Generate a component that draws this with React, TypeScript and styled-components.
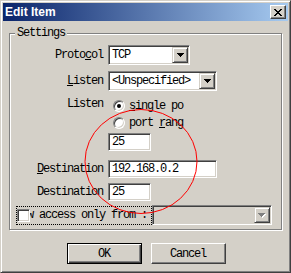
import styled, { createGlobalStyle } from "styled-components";

const GlobalStyle = createGlobalStyle`
  html, body {
    margin: 0;
    padding: 0;
    background: #d4d0c8;
  }
`;

const mono = `"Liberation Mono", "DejaVu Sans Mono", monospace`;

const Window = styled.div`
  position: relative;
  box-sizing: border-box;
  width: 291px;
  height: 273px;
  padding: 2px;
  background: #d4d0c8;
  border: 1px solid;
  border-color: #d4d0c8 #404040 #404040 #d4d0c8;
  box-shadow: inset 1px 1px 0 #ffffff, inset -1px -1px 0 #808080;
  font-family: ${mono};
  font-size: 12px;
  letter-spacing: -1.2px;
  color: #000;
  display: flex;
  flex-direction: column;
`;

const TitleBar = styled.div`
  height: 18px;
  display: flex;
  align-items: center;
  justify-content: space-between;
  padding: 0 2px 0 2px;
  background: linear-gradient(to right, #0a246a, #a6caf0);
`;

const Title = styled.span`
  font-family: "Liberation Sans", Arial, sans-serif;
  font-weight: bold;
  font-size: 12px;
  letter-spacing: 0;
  color: #ffffff;
`;

const CloseButton = styled.div`
  box-sizing: border-box;
  width: 16px;
  height: 14px;
  display: flex;
  align-items: center;
  justify-content: center;
  background: #d4d0c8;
  border: 1px solid;
  border-color: #ffffff #404040 #404040 #ffffff;
  box-shadow: inset -1px -1px 0 #808080;
`;

const Body = styled.div`
  display: flex;
  flex-direction: column;
  padding: 12px 6px 0 6px;
`;

const Group = styled.div`
  display: flex;
  flex-direction: column;
  height: 197px;
  box-sizing: border-box;
  border: 1px solid #808080;
  box-shadow: inset 1px 1px 0 #ffffff, 1px 1px 0 #ffffff;
  padding-bottom: 4px;
`;

const Legend = styled.span`
  align-self: flex-start;
  margin: -7px 0 0 5px;
  padding: 0 2px;
  line-height: 12px;
  background: #d4d0c8;
`;

const FieldRow = styled.div<{ $top: number }>`
  display: grid;
  grid-template-columns: 93px auto;
  column-gap: 5px;
  align-items: center;
  justify-items: start;
  margin-top: ${({ $top }) => $top}px;
`;

const Label = styled.span<{ $start?: boolean }>`
  justify-self: end;
  line-height: 12px;
  white-space: nowrap;
  align-self: ${({ $start }) => ($start ? "start" : "center")};
  margin-top: ${({ $start }) => ($start ? "1px" : "0")};
`;

const Sunken = styled.div<{ $w: number; $h: number; $disabled?: boolean }>`
  box-sizing: border-box;
  width: ${({ $w }) => $w}px;
  height: ${({ $h }) => $h}px;
  display: flex;
  align-items: center;
  padding: 0 2px 0 2px;
  background: ${({ $disabled }) => ($disabled ? "#d4d0c8" : "#ffffff")};
  border: 1px solid;
  border-color: #808080 #ffffff #ffffff #808080;
  box-shadow: inset 1px 1px 0 #404040, inset -1px -1px 0 #d4d0c8;
  white-space: nowrap;
  overflow: hidden;
`;

const FieldText = styled.span`
  flex: 1;
  padding-left: 1px;
  line-height: 12px;
`;

const ArrowButton = styled.div`
  box-sizing: border-box;
  width: 16px;
  height: 16px;
  display: flex;
  align-items: center;
  justify-content: center;
  margin-right: -1px;
  background: #d4d0c8;
  border: 1px solid;
  border-color: #d4d0c8 #404040 #404040 #d4d0c8;
  box-shadow: inset 1px 1px 0 #ffffff, inset -1px -1px 0 #808080;
`;

const RadioList = styled.div`
  display: flex;
  flex-direction: column;
`;

const RadioOption = styled.div`
  height: 17px;
  display: flex;
  align-items: center;
  gap: 4px;
  margin-left: 5px;
`;

const RadioCircle = styled.span<{ $checked?: boolean }>`
  box-sizing: border-box;
  position: relative;
  width: 12px;
  height: 12px;
  border-radius: 50%;
  background: #ffffff;
  border: 1px solid;
  border-color: #808080 #ffffff #ffffff #808080;
  box-shadow: inset 1px 1px 0 #404040, inset -1px -1px 0 #d4d0c8;
  &::after {
    content: "";
    display: ${({ $checked }) => ($checked ? "block" : "none")};
    position: absolute;
    left: 3px;
    top: 3px;
    width: 4px;
    height: 4px;
    border-radius: 50%;
    background: #000;
  }
`;

const CheckRow = styled.div`
  display: flex;
  align-items: center;
  margin: 4px 0 0 6px;
`;

const Focus = styled.div`
  box-sizing: border-box;
  width: 136px;
  height: 19px;
  display: flex;
  align-items: center;
  border: 1px dotted #000;
`;

const CheckBox = styled.span`
  box-sizing: border-box;
  width: 13px;
  height: 13px;
  flex: none;
  background: #ffffff;
  border: 1px solid;
  border-color: #808080 #ffffff #ffffff #808080;
  box-shadow: inset 1px 1px 0 #404040, inset -1px -1px 0 #d4d0c8;
`;

const CheckClip = styled.span`
  flex: 1;
  overflow: hidden;
  white-space: nowrap;
  line-height: 12px;
`;

const CheckText = styled.span`
  display: inline-block;
  margin-left: -27px;
`;

const ButtonRow = styled.div`
  display: flex;
  justify-content: center;
  gap: 9px;
  margin-top: 13px;
  padding-left: 1px;
`;

const Button = styled.div<{ $default?: boolean }>`
  box-sizing: border-box;
  width: 75px;
  height: 21px;
  display: flex;
  align-items: center;
  justify-content: center;
  background: #d4d0c8;
  border: 1px solid;
  border-color: ${({ $default }) =>
    $default ? "#000000" : "#ffffff #404040 #404040 #ffffff"};
  box-shadow: ${({ $default }) =>
    $default
      ? "inset 1px 1px 0 #ffffff, inset -1px -1px 0 #404040, inset -2px -2px 0 #808080"
      : "inset -1px -1px 0 #808080"};
`;

const Annotation = styled.svg`
  position: absolute;
  left: -1px;
  top: -1px;
  pointer-events: none;
`;

const DownArrow = ({ color = "#000" }: { color?: string }) => (
  <svg width="7" height="4" viewBox="0 0 7 4" shapeRendering="crispEdges">
    <path d="M0 0h7v1h-1v1h-1v1h-1v1h-1v-1h-1v-1h-1v-1h-1z" fill={color} />
  </svg>
);

const DisabledArrow = () => (
  <svg width="8" height="5" viewBox="0 0 8 5" shapeRendering="crispEdges">
    <path d="M1 1h7v1h-1v1h-1v1h-1v1h-1v-1h-1v-1h-1v-1h-1z" fill="#ffffff" />
    <path d="M0 0h7v1h-1v1h-1v1h-1v1h-1v-1h-1v-1h-1v-1h-1z" fill="#808080" />
  </svg>
);

const App = () => {
  return (
    <>
      <GlobalStyle />
      <Window>
        <TitleBar>
          <Title>Edit Item</Title>
          <CloseButton>
            <svg width="8" height="7" viewBox="0 0 8 7" shapeRendering="crispEdges">
              <path
                d="M0 0h2v1h1v1h2v-1h1v-1h2v1h-1v1h-1v1h-1v1h1v1h1v1h1v1h-2v-1h-1v-1h-2v1h-1v1h-2v-1h1v-1h1v-1h1v-1h-1v-1h-1v-1h-1z"
                fill="#000"
              />
            </svg>
          </CloseButton>
        </TitleBar>
        <Body>
          <Group>
            <Legend>Settings</Legend>
            <FieldRow $top={6}>
              <Label>
                Proto<u>c</u>ol
              </Label>
              <Sunken $w={82} $h={20}>
                <FieldText>TCP</FieldText>
                <ArrowButton>
                  <DownArrow />
                </ArrowButton>
              </Sunken>
            </FieldRow>
            <FieldRow $top={6}>
              <Label>
                <u>L</u>isten
              </Label>
              <Sunken $w={109} $h={20}>
                <FieldText>&lt;Unspecified&gt;</FieldText>
                <ArrowButton>
                  <DownArrow />
                </ArrowButton>
              </Sunken>
            </FieldRow>
            <FieldRow $top={6}>
              <Label $start>Listen</Label>
              <RadioList>
                <RadioOption>
                  <RadioCircle $checked />
                  <span>
                    <u>s</u>ingle po
                  </span>
                </RadioOption>
                <RadioOption>
                  <RadioCircle />
                  <span>
                    port <u>r</u>ang
                  </span>
                </RadioOption>
              </RadioList>
            </FieldRow>
            <FieldRow $top={2}>
              <span />
              <Sunken $w={43} $h={18}>
                <FieldText>25</FieldText>
              </Sunken>
            </FieldRow>
            <FieldRow $top={9}>
              <Label>
                <u>D</u>estination
              </Label>
              <Sunken $w={109} $h={18}>
                <FieldText>192.168.0.2</FieldText>
              </Sunken>
            </FieldRow>
            <FieldRow $top={5}>
              <Label>Destination</Label>
              <Sunken $w={43} $h={18}>
                <FieldText>25</FieldText>
              </Sunken>
            </FieldRow>
            <CheckRow>
              <Focus>
                <CheckBox />
                <CheckClip>
                  <CheckText>Allow access only from :</CheckText>
                </CheckClip>
              </Focus>
              <Sunken $w={120} $h={20} $disabled>
                <FieldText />
                <ArrowButton>
                  <DisabledArrow />
                </ArrowButton>
              </Sunken>
            </CheckRow>
          </Group>
          <ButtonRow>
            <Button $default>OK</Button>
            <Button>Cancel</Button>
          </ButtonRow>
        </Body>
        <Annotation width="291" height="273" viewBox="0 0 291 273">
          <ellipse
            cx="141"
            cy="161.5"
            rx="56"
            ry="52"
            fill="none"
            stroke="#ff0000"
            strokeWidth="1"
          />
        </Annotation>
      </Window>
    </>
  );
};

export default App;
